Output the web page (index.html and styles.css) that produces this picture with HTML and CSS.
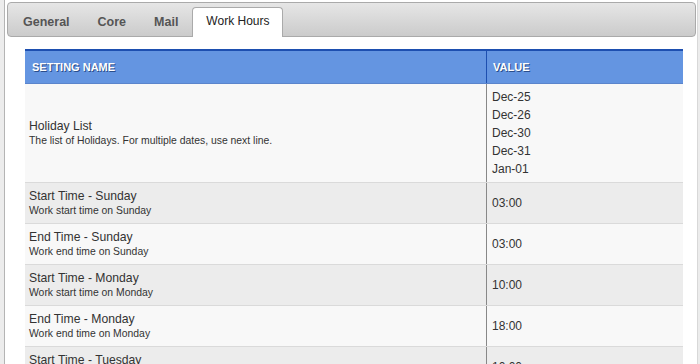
FILE: index.html
```html
<!DOCTYPE html>
<html>
<head>
<meta charset="utf-8">
<link rel="stylesheet" href="styles.css">
</head>
<body>
<div class="page">
  <div class="panel">
    <ul class="tabs">
      <li class="tab">General</li>
      <li class="tab">Core</li>
      <li class="tab">Mail</li>
      <li class="tab active">Work Hours</li>
    </ul>
    <div class="content">
      <table class="settings">
        <thead>
          <tr><th class="c-name">Setting Name</th><th class="c-val">Value</th></tr>
        </thead>
        <tbody>
          <tr class="odd">
            <td class="c-name"><div class="title">Holiday List</div><div class="desc">The list of Holidays. For multiple dates, use next line.</div></td>
            <td class="c-val multi">Dec-25<br>Dec-26<br>Dec-30<br>Dec-31<br>Jan-01</td>
          </tr>
          <tr class="even">
            <td class="c-name"><div class="title">Start Time - Sunday</div><div class="desc">Work start time on Sunday</div></td>
            <td class="c-val">03:00</td>
          </tr>
          <tr class="odd">
            <td class="c-name"><div class="title">End Time - Sunday</div><div class="desc">Work end time on Sunday</div></td>
            <td class="c-val">03:00</td>
          </tr>
          <tr class="even">
            <td class="c-name"><div class="title">Start Time - Monday</div><div class="desc">Work start time on Monday</div></td>
            <td class="c-val">10:00</td>
          </tr>
          <tr class="odd">
            <td class="c-name"><div class="title">End Time - Monday</div><div class="desc">Work end time on Monday</div></td>
            <td class="c-val">18:00</td>
          </tr>
          <tr class="even">
            <td class="c-name"><div class="title">Start Time - Tuesday</div><div class="desc">Work start time on Tuesday</div></td>
            <td class="c-val">10:00</td>
          </tr>
        </tbody>
      </table>
    </div>
  </div>
</div>
</body>
</html>
```
FILE: styles.css
```css
html, body {
  margin: 0;
  padding: 0;
  height: 100%;
  overflow: hidden;
}
body {
  background: #ececec;
  font-family: "Liberation Sans", Arial, sans-serif;
  color: #333;
}
.page {
  margin-left: 4px;
  margin-right: 2px;
  height: 100%;
  background: #fff;
  border-left: 1px solid #b4b4b4;
  border-right: 1px solid #d8d8d8;
  padding: 2px 1px 0 2px;
  box-sizing: border-box;
}
.panel {
  display: flex;
  flex-direction: column;
}
.tabs {
  list-style: none;
  margin: 0;
  padding: 4px 0 0 1px;
  height: 29px;
  display: flex;
  align-items: flex-end;
  border: 1px solid #aaa;
  border-radius: 4px;
  background: linear-gradient(#e6e6e6, #cbcbcb);
}
.tab {
  height: 28px;
  line-height: 26px;
  padding: 0 13px;
  border: 1px solid transparent;
  border-bottom: 0;
  border-radius: 4px 4px 0 0;
  font-size: 12.5px;
  font-weight: bold;
  color: #555;
  margin-bottom: -1px;
}
.tab.active {
  height: 29px;
  background: #fff;
  border-color: #aaa;
  font-size: 12px;
  font-weight: normal;
  color: #222;
}
.content {
  padding: 12px 12px 0 18px;
}
.settings {
  width: 658px;
  border-collapse: collapse;
  table-layout: fixed;
}
.settings th.c-name { width: 448px; }
.settings th {
  background: #6495e1;
  border-top: 2px solid #1d4fb0;
  height: 32px;
  padding: 0 6px 0 7px;
  text-align: left;
  font-size: 11px;
  font-weight: bold;
  text-transform: uppercase;
  color: #fff;
  text-shadow: 1px 1px 0 #2a4d8a;
  border-bottom: 1px solid #5b85cc;
}
.settings th.c-val {
  border-left: 1px solid #1d4fb0;
  padding-left: 6px;
}
.settings td {
  padding: 5px 5px 5px 4px;
  border-bottom: 1px solid #dadada;
  vertical-align: middle;
  font-size: 12px;
}
.settings td.c-val {
  border-left: 1px solid #888;
  padding-left: 5px;
}
.settings td.multi {
  line-height: 18px;
  padding-top: 4px;
  padding-bottom: 4px;
}
.odd { background: #f8f8f8; }
.even { background: #ececec; }
.title {
  font-size: 12.2px;
  line-height: 16px;
  color: #333;
}
.desc {
  font-size: 10.4px;
  line-height: 14px;
  color: #333;
}
```
